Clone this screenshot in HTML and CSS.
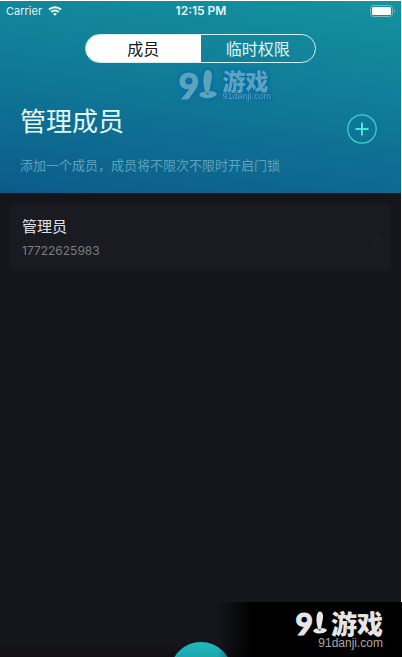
FILE: index.html
```html
<!DOCTYPE html>
<html lang="zh-CN">
<head>
<meta charset="utf-8">
<meta name="viewport" content="width=device-width, initial-scale=1">
<title>管理成员</title>
<link rel="stylesheet" href="styles.css">
</head>
<body>
<div class="screen">
  <header class="hero">
    <div class="status">
      <div class="carrier">
        <span>Carrier</span>
        <svg class="wifi" viewBox="0 0 14 10" aria-hidden="true">
          <path d="M1 3.6C4.3.5 9.700.5 13 3.600" />
          <path d="M3.200 6C5.300 4 8.700 4 10.800 6" />
          <path class="wifi-dot" d="M5 7.700Q7 6.200 9 7.700L7 9.800Z" />
        </svg>
      </div>
      <span class="clock">12:15 PM</span>
      <svg class="battery" viewBox="0 0 26 12" aria-hidden="true">
        <rect class="battery-case" x=".5" y=".5" width="22" height="11" rx="3" />
        <rect class="battery-fill" x="2" y="2" width="19" height="8" rx="1.500" />
        <path class="battery-cap" d="M24 4Q26 6 24 8Z" />
      </svg>
    </div>
    <nav class="tabs">
      <button class="tab tab-active" type="button">成员</button>
      <button class="tab" type="button">临时权限</button>
    </nav>
    <div class="intro">
      <div>
        <h1>管理成员</h1>
        <p>添加一个成员，成员将不限次不限时开启门锁</p>
      </div>
      <button class="add" type="button" aria-label="添加成员">
        <svg viewBox="0 0 30 30" aria-hidden="true">
          <circle cx="15" cy="15" r="14.200" />
          <path class="plus" d="M15 8.500V21.500M8.500 15H21.500" />
        </svg>
      </button>
    </div>
    <div class="brand brand-tint">
      <div class="mark">
        <span class="nine">9</span>
        <svg class="pin" viewBox="0 0 18 30" aria-hidden="true">
          <path d="M7 24C3 15 4 2 8 1C13 0 14 7 12 14L10 24Z" />
          <path d="M0 26C1 23 5 22 6 23L9 26L11 22C14 22 17 23 18 25C15 30 4 31 0 26Z" />
        </svg>
      </div>
      <strong>游戏</strong>
      <span class="domain">91danji.com</span>
    </div>
  </header>
  <main class="list">
    <a class="member" href="#member">
      <span class="member-info">
        <span class="member-name">管理员</span>
        <span class="member-phone">17722625983</span>
      </span>
      <svg class="chevron" viewBox="0 0 9 15" aria-hidden="true"><path d="M1 1L8 7.500L1 14" /></svg>
    </a>
  </main>
  <footer class="dock"><button class="home" type="button" aria-label="主页"></button></footer>
</div>
<div class="stamp">
  <div class="brand brand-plain">
    <div class="mark">
      <span class="nine">9</span>
      <svg class="pin" viewBox="0 0 18 30" aria-hidden="true">
        <path d="M7 24C3 15 4 2 8 1C13 0 14 7 12 14L10 24Z" />
        <path d="M0 26C1 23 5 22 6 23L9 26L11 22C14 22 17 23 18 25C15 30 4 31 0 26Z" />
      </svg>
    </div>
    <strong>游戏</strong>
    <span class="domain">91danji.com</span>
  </div>
</div>
</body>
</html>
```
FILE: styles.css
```css
* { box-sizing: border-box; }

body {
  position: relative;
  min-height: 100vh;
  margin: 0;
  padding: 1px 1px 0 0;
  overflow: hidden;
  display: flex;
  flex-direction: column;
  background: #fff;
  color: #fff;
  font-family: Inter, "Noto Sans CJK SC", sans-serif;
}

button {
  margin: 0;
  padding: 0;
  border: 0;
  background: none;
  color: inherit;
  font: inherit;
}

.screen {
  flex: 1;
  display: flex;
  flex-direction: column;
  background: #14161b;
}

.hero {
  position: relative;
  padding-bottom: 18px;
  background: linear-gradient(188deg, #15929f 0%, #107b98 45%, #0c5b8a 100%);
}

.status {
  display: grid;
  grid-template-columns: 1fr auto 1fr;
  align-items: center;
  height: 20px;
  padding: 0 5px 0 6px;
  font-size: 11px;
  line-height: 20px;
  color: #e4f5f6;
}

.carrier { display: flex; align-items: center; gap: 6px; }
.clock { font-size: 12px; font-weight: 600; }

.wifi { width: 14px; height: 10px; fill: none; stroke: #f2fbfb; stroke-width: 2; }
.wifi-dot { fill: #f2fbfb; stroke: none; }

.battery { justify-self: end; width: 26px; height: 12px; }
.battery-case { fill: none; stroke: #70bdc5; }
.battery-fill { fill: #fff; }
.battery-cap { fill: #70bdc5; }

.tabs {
  display: flex;
  width: 231px;
  height: 29px;
  margin: 13px auto 0;
  overflow: hidden;
  border: 1px solid #d5f0f2;
  border-radius: 15px;
}

.tab {
  flex: 1;
  padding-top: 1px;
  color: #e0f6f7;
  font-size: 16px;
  line-height: 26px;
}

.tab-active { background: #fff; color: #15171c; }

.intro {
  display: flex;
  justify-content: space-between;
  padding: 40px 24px 0 20px;
}

h1 {
  margin: 0;
  font-size: 26px;
  font-weight: 400;
  line-height: 38px;
  color: #e5fafb;
}

p {
  margin: 14px 0 0;
  font-size: 13px;
  line-height: 20px;
  color: #5ea3b9;
}

.add { align-self: flex-start; width: 30px; height: 30px; margin-top: 11px; }
.add svg { display: block; fill: none; stroke: #3ed9ca; stroke-width: 1.200; }
.plus { stroke: #40ead0; stroke-width: 2; }

.list { flex: 1; padding: 10px; }

.member {
  display: flex;
  align-items: center;
  justify-content: space-between;
  height: 68px;
  padding: 0 10px 0 12px;
  border-radius: 5px;
  background: #1a1b22;
  color: #e2e2e4;
  text-decoration: none;
}

.member-info { display: grid; gap: 4px; }
.member-name { font-size: 15px; line-height: 24px; }
.member-phone { font-size: 12px; line-height: 16px; color: #7c7c80; }
.chevron { width: 9px; height: 15px; fill: none; stroke: #2b2c31; }

.dock {
  height: 15px;
  overflow: hidden;
  text-align: center;
  background: linear-gradient(#14161b, #130f15);
}

.home {
  width: 62px;
  height: 62px;
  border-radius: 50%;
  background: linear-gradient(#23babb, #1591a0 50%);
}

.brand {
  display: grid;
  grid-template-columns: auto auto;
  align-content: start;
  color: #e6e6e6;
}

.mark { display: flex; }

.nine {
  font-family: Lato, sans-serif;
  font-weight: 900;
  -webkit-text-stroke: 1px currentColor;
}

.pin { fill: currentColor; }

.brand strong {
  font-family: "Noto Sans CJK SC", sans-serif;
  font-weight: 900;
}

.domain { font-family: "Liberation Sans", sans-serif; }

.stamp {
  position: absolute;
  right: 0;
  bottom: 0;
  width: 184px;
  height: 55px;
  display: flex;
  justify-content: flex-end;
  padding: 8px 19px 0 0;
  background: linear-gradient(90deg, transparent, #000 36px);
}

.brand-plain { column-gap: 4px; }
.brand-plain .nine { font-size: 30px; line-height: 26px; }
.brand-plain .pin { width: 14px; height: 25px; }
.brand-plain strong { font-size: 26px; line-height: 26px; }

.brand-plain .domain {
  grid-column: 1 / -1;
  justify-self: end;
  font-size: 12px;
  line-height: 14px;
  color: #aaa;
}

.brand-tint {
  position: absolute;
  left: calc(50% - 22px);
  top: 68px;
  column-gap: 5px;
  color: #5ba4bb;
  filter: drop-shadow(0 0 1px #096eaa) drop-shadow(0 0 1px #096eaa) drop-shadow(0 0 2px #096eaa);
}

.brand-tint .mark { grid-row: 1 / 3; }
.brand-tint .nine { font-size: 36px; line-height: 32px; }
.brand-tint .pin { width: 18px; height: 30px; }
.brand-tint strong { font-size: 23px; line-height: 23px; }
.brand-tint .domain { font-size: 9px; line-height: 9px; }
```
